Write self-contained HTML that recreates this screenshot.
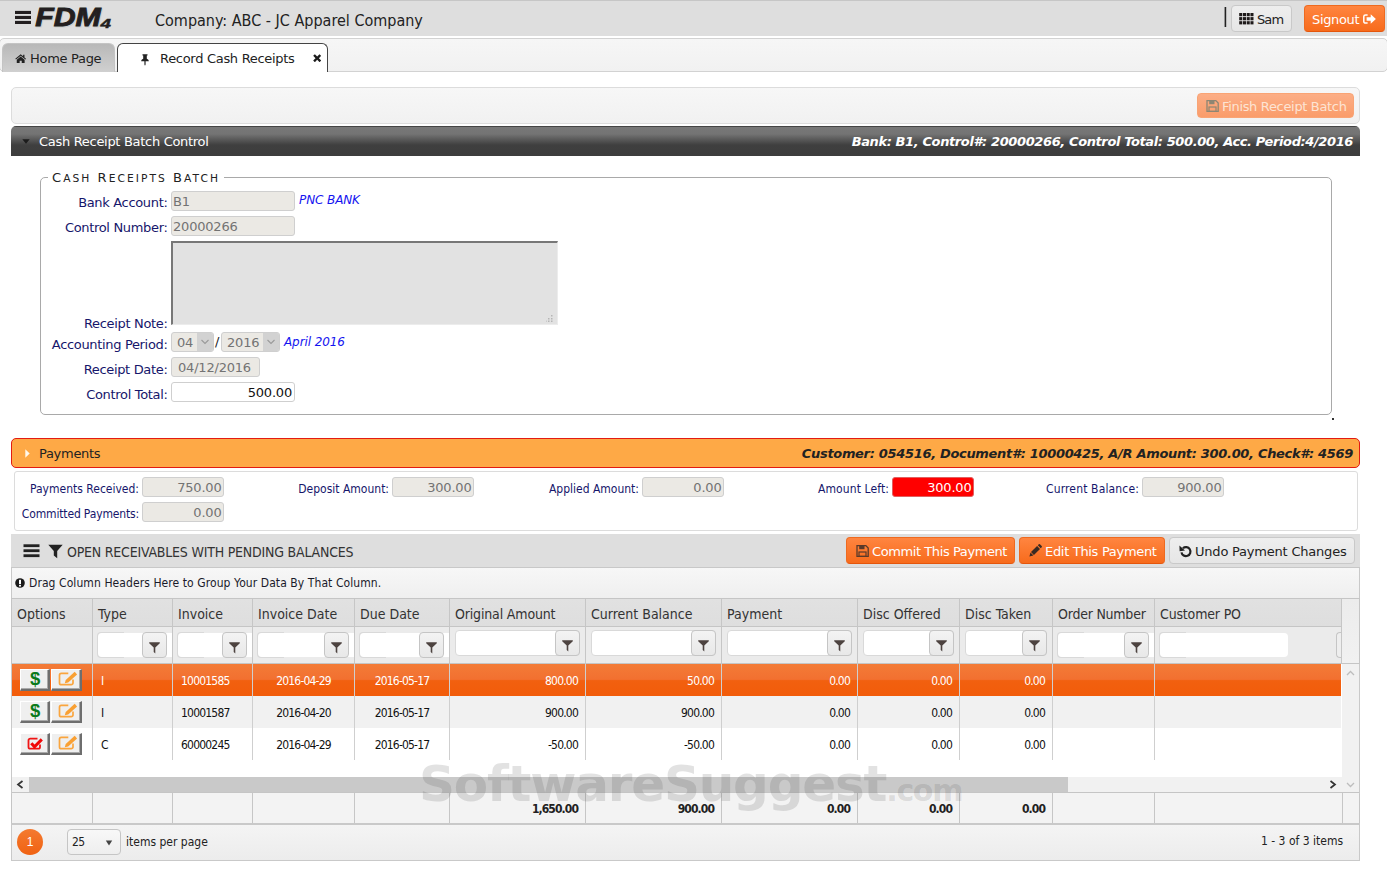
<!DOCTYPE html>
<html><head><meta charset="utf-8"><title>Record Cash Receipts</title>
<style>
*{box-sizing:border-box;margin:0;padding:0}
html,body{width:1387px;height:882px;overflow:hidden;background:#fff}
body{position:relative;font-family:"DejaVu Sans","Liberation Sans",sans-serif;font-size:13px;color:#222}
.a{position:absolute;white-space:nowrap}
.v{font-family:"DejaVu Sans","Liberation Sans",sans-serif;font-size:13px;letter-spacing:-0.3px}
.t{font-family:"DejaVu Sans Condensed","Liberation Sans",sans-serif}
/* top bar */
#top{left:0;top:0;width:1387px;height:36px;background:#dedede;border-top:1px solid #c6c6c6}
#tabs{left:-1px;top:38px;width:1389px;height:34px;background:linear-gradient(#f6f6f6,#f1f1f1);border:1px solid #d2d2d2;border-radius:5px}
.tab{top:43px;height:29px;border-radius:6px 6px 0 0;line-height:29px}
#tab1{left:2px;width:113px;background:linear-gradient(#b8b8b8,#d0d0d0);border:1px solid #c4c4c4;border-bottom:none}
#tab2{left:117px;width:211px;background:#fff;border:1px solid #444;border-bottom:none}
.btn{border-radius:4px;text-align:center}
.obtn{background:linear-gradient(#ff8540,#f76b1c);border:1px solid #ee6a20;border-bottom-color:#e4560c;color:#fff}
.gbtn{background:linear-gradient(#eeeeee,#e6e6e6);border:1px solid #c9c9c9;color:#222}

#hdr1{left:11px;top:126px;width:1349px;height:30px;border-radius:5px 5px 0 0;background:linear-gradient(#444 0,#444 1px,#777 1.500px,#747474 8px,#656565 11px,#525252 15px,#3f3f3f 19px,#3d3d3d 100%);color:#fff;line-height:30px}
#hdr2{left:11px;top:438px;width:1349px;height:30px;border-radius:5px;background:#fea946;border:1px solid #e21b12;color:#222;line-height:28px}
#tb1{left:11px;top:87px;width:1349px;height:37px;border:1px solid #dcdcdc;border-radius:5px;background:linear-gradient(#f7f7f7,#f1f1f1)}
.bi{font-weight:bold;font-style:italic}

#fs{left:40px;top:177px;width:1292px;height:238px;border:1px solid #a9a9a9;border-radius:5px}
.lbl{color:#16166b;text-align:right;width:160px;left:7.500px;margin-top:1px;line-height:18px;letter-spacing:-0.33px}
.inp{height:20px;border:1px solid #cfcfcf;border-radius:3px;background:#ebe9e4;color:#737373;line-height:20px;padding:0 1px;letter-spacing:-0.2px}
.it{font-style:italic;color:#1414f0;font-size:12px;letter-spacing:-0.1px;line-height:18px}
.sl{font-family:"DejaVu Sans Condensed","Liberation Sans",sans-serif;font-size:12px;color:#16166b;text-align:right;line-height:18px}
.si{font-size:13px;text-align:right;padding:0 1.500px 0 2px}

#gtb{left:11px;top:534px;width:1349px;height:34px;background:#dedede;border-bottom:1px solid #c8c8c8}
#grp{left:11px;top:568px;width:1349px;height:30px;background:linear-gradient(#f7f7f7,#efefef);border-left:1px solid #c9c9c9;border-right:1px solid #c9c9c9}
#ghd{left:11px;top:598px;width:1349px;height:29px;background:linear-gradient(#e1e1e1,#dedede);border:1px solid #c5c5c5}
#gfl{left:11px;top:627px;width:1349px;height:37px;background:#ebebeb;border-left:1px solid #c5c5c5;border-right:1px solid #c5c5c5;border-bottom:1px solid #c5c5c5}
.vl{width:1px;background:#c6c6c6}
.th{top:604px;line-height:20px;font-size:14px;color:#333;font-family:"DejaVu Sans Condensed","Liberation Sans",sans-serif}
.row{left:12px;width:1329px;height:32px}
.td{font-family:"DejaVu Sans Condensed","Liberation Sans",sans-serif;font-size:12px;letter-spacing:-0.8px;line-height:20px;color:#111}
.r{text-align:right}.c{text-align:center}
.fb{width:25px;height:26px;border:1px solid #c5c5c5;border-radius:4px;background:linear-gradient(#f3f3f3,#e8e8e8)}
.fi{height:26px;border:1px solid #d9d9d9;border-radius:4px;background:#fff}
.ob{height:22px;background:#efefef;border-top:1px solid #fff;border-left:1px solid #fff;border-right:2px solid #6e6e6e;border-bottom:2px solid #6e6e6e;box-shadow:inset -1px -1px 0 #a9a9a9}
</style></head>
<body>
<div id="top" class="a"></div>
<div id="tabs" class="a"></div>

<!-- top bar content -->
<svg class="a" style="left:14px;top:6px" width="100" height="26" viewBox="0 0 100 26">
 <rect x="1" y="4.900" width="16" height="3.100" fill="#231f20"/><rect x="1" y="9.900" width="16" height="3.100" fill="#231f20"/><rect x="1" y="14.900" width="16" height="3.100" fill="#231f20"/>
 <text x="22.300" y="21" font-family="Liberation Sans, sans-serif" font-weight="bold" font-style="italic" font-size="25.500" fill="#cfcfcf" stroke="#cfcfcf" stroke-width="0.900" textLength="65.500" lengthAdjust="spacingAndGlyphs">FDM</text>
 <text x="21.300" y="20" font-family="Liberation Sans, sans-serif" font-weight="bold" font-style="italic" font-size="25.500" fill="#231f20" stroke="#231f20" stroke-width="0.900" stroke-linejoin="miter" textLength="65.500" lengthAdjust="spacingAndGlyphs">FDM</text>
 <text x="86.500" y="21.600" font-family="Liberation Sans, sans-serif" font-weight="bold" font-style="italic" font-size="12.500" fill="#231f20" stroke="#231f20" stroke-width="0.400" textLength="10.500" lengthAdjust="spacingAndGlyphs">4</text>
</svg>
<div class="a t" style="left:155px;top:10.500px;font-size:16px;line-height:20px;color:#222">Company: ABC - JC Apparel Company</div>
<svg class="a" style="left:1223px;top:7px" width="5" height="20"><rect x="1.600" y="0" width="1.600" height="20" fill="#222"/></svg>
<div class="a btn gbtn" style="left:1231px;top:5px;width:61px;height:27px"></div>
<svg class="a" style="left:1238.600px;top:12.600px" width="15" height="12" viewBox="0 0 15 12"><g fill="#1e1a1a"><rect x="0.20" y="0.00" width="3.05" height="3.2"/><rect x="3.95" y="0.00" width="3.05" height="3.2"/><rect x="7.70" y="0.00" width="3.05" height="3.2"/><rect x="11.45" y="0.00" width="3.05" height="3.2"/><rect x="0.20" y="4.10" width="3.05" height="3.2"/><rect x="3.95" y="4.10" width="3.05" height="3.2"/><rect x="7.70" y="4.10" width="3.05" height="3.2"/><rect x="11.45" y="4.10" width="3.05" height="3.2"/><rect x="0.20" y="8.20" width="3.05" height="3.2"/><rect x="3.95" y="8.20" width="3.05" height="3.2"/><rect x="7.70" y="8.20" width="3.05" height="3.2"/><rect x="11.45" y="8.20" width="3.05" height="3.2"/></g></svg>
<div class="a v" style="left:1257px;top:11px;line-height:18px;color:#222;letter-spacing:-0.9px">Sam</div>
<div class="a btn obtn" style="left:1304px;top:5px;width:81px;height:27px"></div>
<div class="a v" style="left:1312px;top:11px;line-height:18px;color:#fff;letter-spacing:-0.35px">Signout</div>
<svg class="a" style="left:1363.400px;top:14.200px" width="13" height="10" viewBox="0 0 13 10"><path d="M4.600 0.900H2.500A1.700 1.700 0 0 0 0.800 2.600V7.400A1.700 1.700 0 0 0 2.500 9.100H4.600" fill="none" stroke="#fff" stroke-width="1.500"/><path d="M3.600 3.300H7.700V0.300L12.900 5 7.700 9.700V6.700H3.600z" fill="#fff"/></svg>
<!-- tabs -->
<div id="tab1" class="a tab"></div>
<div id="tab2" class="a tab"></div>
<svg class="a" style="left:14.800px;top:53.800px" width="11.400" height="9.600" viewBox="0 0 13 11"><path d="M6.500 0.300L0.300 5.500l0.800 0.900L6.500 1.900l5.400 4.500 0.800-0.900L10.800 3.900V0.900H9.300v1.700z" fill="#222"/><path d="M6.500 2.800L2 6.600v4.100h3.300V7.600h2.400v3.100H11V6.600z" fill="#222"/></svg>
<div class="a v" style="left:30px;top:50px;line-height:18px;color:#222">Home Page</div>
<svg class="a" style="left:140px;top:54px" width="10" height="12" viewBox="0 0 10 12"><path d="M2.500 0.300h5v1.200H6.800v3.300c1.300 0.500 2 1.400 2 2.500H5.600v3.200L5 11.700l-0.600-1.200V7.300H1.200c0-1.100 0.700-2 2-2.500V1.500H2.500z" fill="#222"/></svg>
<div class="a v" style="left:160px;top:50px;line-height:18px;color:#222">Record Cash Receipts</div>
<svg class="a" style="left:312.500px;top:54px" width="8.400" height="8.400" viewBox="0 0 9 9"><path d="M2 0.200L4.500 2.700 7 0.200 8.800 2 6.300 4.500 8.800 7 7 8.800 4.500 6.300 2 8.800 0.200 7 2.700 4.500 0.200 2z" fill="#1c1c1c"/></svg>
<!-- toolbar -->
<div id="tb1" class="a"></div>
<div class="a btn" style="left:1197px;top:93px;width:157px;height:25px;background:linear-gradient(#fcae86,#fa9c6a);border:1px solid #f9a475"></div>
<svg class="a" style="left:1206px;top:100px" width="13" height="12" viewBox="0 0 13 12"><path d="M1 0.600h8.800L12.200 3v8.400H1z" fill="none" stroke="#8d8673" stroke-width="1.300"/><rect x="3.200" y="0.600" width="5.300" height="3.600" fill="#8d8673"/><rect x="3" y="7" width="7" height="4.400" fill="none" stroke="#8d8673" stroke-width="1.200"/></svg>
<div class="a v" style="left:1222px;top:98px;line-height:18px;color:#fde4d4;letter-spacing:-0.33px">Finish Receipt Batch</div>
<!-- dark header -->
<div id="hdr1" class="a"></div>
<svg class="a" style="left:22px;top:139px" width="8" height="5" viewBox="0 0 8 5"><path d="M0.300 0.300h7.400L4 4.700z" fill="#1c1c1c"/></svg>
<div class="a v" style="left:39px;top:133px;line-height:18px;color:#fff">Cash Receipt Batch Control</div>
<div class="a v bi" style="right:34px;top:133px;line-height:18px;color:#fff;letter-spacing:-0.39px">Bank: B1, Control#: 20000266, Control Total: 500.00, Acc. Period:4/2016</div>

<!-- fieldset -->
<div id="fs" class="a"></div>
<div class="a" style="left:48px;top:168px;height:20px;width:176px;background:#fff"></div>
<div class="a" style="left:52px;top:168px;line-height:20px;font-size:13px;color:#222;letter-spacing:2.05px;font-family:'DejaVu Sans',sans-serif">C<span style="font-size:10.700px">ASH</span> R<span style="font-size:10.700px">ECEIPTS</span> B<span style="font-size:10.700px">ATCH</span></div>
<div class="a v lbl" style="top:193px">Bank Account:</div>
<div class="a v inp" style="left:171px;top:191px;width:124px">B1</div>
<div class="a v it" style="left:299px;top:191px">PNC BANK</div>
<div class="a v lbl" style="top:218px">Control Number:</div>
<div class="a v inp" style="left:171px;top:216px;width:124px">20000266</div>
<div class="a" style="left:171px;top:241px;width:387px;height:84px;background:#e2e2e2;border-top:2px solid #777;border-left:2px solid #777;border-right:1px solid #ececec;border-bottom:1px solid #ececec"></div>
<svg class="a" style="left:546px;top:314px" width="8" height="8" viewBox="0 0 8 8"><g fill="#b5b5b5"><rect x="5" y="1" width="1.500" height="1.500"/><rect x="5" y="4" width="1.500" height="1.500"/><rect x="2" y="4" width="1.500" height="1.500"/><rect x="5" y="6.500" width="1.500" height="1.500"/><rect x="2" y="6.500" width="1.500" height="1.500"/><rect x="-1" y="6.500" width="1.500" height="1.500"/></g></svg>
<div class="a v lbl" style="top:314px">Receipt Note:</div>
<div class="a v lbl" style="top:335px">Accounting Period:</div>
<div class="a v inp" style="left:171px;top:332px;width:43px;padding-left:5px">04</div>
<div class="a" style="left:197px;top:333px;width:16px;height:18px;background:#d2d2d2;border-radius:0 2px 2px 0"></div>
<svg class="a" style="left:200px;top:339px" width="10" height="6" viewBox="0 0 10 6"><path d="M1.500 1L5 4.500 8.500 1" fill="none" stroke="#9a9a9a" stroke-width="1.100"/></svg>
<div class="a v" style="left:215px;top:333px;line-height:18px;color:#222">/</div>
<div class="a v inp" style="left:221px;top:332px;width:59px;padding-left:5px">2016</div>
<div class="a" style="left:263px;top:333px;width:16px;height:18px;background:#d2d2d2;border-radius:0 2px 2px 0"></div>
<svg class="a" style="left:266px;top:339px" width="10" height="6" viewBox="0 0 10 6"><path d="M1.500 1L5 4.500 8.500 1" fill="none" stroke="#9a9a9a" stroke-width="1.100"/></svg>
<div class="a v it" style="left:284px;top:333px">April 2016</div>
<div class="a v lbl" style="top:360px">Receipt Date:</div>
<div class="a v inp" style="left:171px;top:357px;width:89px;padding-left:6px">04/12/2016</div>
<div class="a v lbl" style="top:385px">Control Total:</div>
<div class="a v inp" style="left:171px;top:382px;width:124px;background:#fff;color:#111;text-align:right;padding-right:2px">500.00</div>
<div class="a" style="left:1332px;top:418px;width:2px;height:2px;background:#333"></div>
<!-- payments header -->
<div id="hdr2" class="a"></div>
<svg class="a" style="left:25px;top:449px" width="5" height="9" viewBox="0 0 5 9"><path d="M0.300 0.300L4.700 4.500 0.300 8.700z" fill="#fff8ec"/></svg>
<div class="a v" style="left:39px;top:445px;line-height:18px;color:#222">Payments</div>
<div class="a v bi" style="right:34px;top:445px;line-height:18px;color:#222;letter-spacing:-0.32px">Customer: 054516, Document#: 10000425, A/R Amount: 300.00, Check#: 4569</div>
<!-- summary -->
<div class="a" style="left:14px;top:471px;width:1344px;height:60px;border:1px solid #dcdcdc;border-radius:3px;background:#fff"></div>
<div class="a sl" style="left:0;width:139px;top:480px">Payments Received:</div>
<div class="a v inp si" style="left:142px;top:477px;width:82px">750.00</div>
<div class="a sl" style="left:0;width:139px;top:505px;letter-spacing:-0.15px">Committed Payments:</div>
<div class="a v inp si" style="left:142px;top:502px;width:82px">0.00</div>
<div class="a sl" style="left:250px;width:139px;top:480px">Deposit Amount:</div>
<div class="a v inp si" style="left:392px;top:477px;width:82px">300.00</div>
<div class="a sl" style="left:500px;width:139px;top:480px">Applied Amount:</div>
<div class="a v inp si" style="left:642px;top:477px;width:82px">0.00</div>
<div class="a sl" style="left:750px;width:139px;top:480px;letter-spacing:0.11px">Amount Left:</div>
<div class="a v inp si" style="left:892px;top:477px;width:82px;background:#ff0000;color:#fff;border-color:#e06060">300.00</div>
<div class="a sl" style="left:1000px;width:139px;top:480px;letter-spacing:0.15px">Current Balance:</div>
<div class="a v inp si" style="left:1142px;top:477px;width:82px">900.00</div>
<!-- grid toolbar -->
<div id="gtb" class="a"></div>
<svg class="a" style="left:23px;top:544px" width="17" height="14" viewBox="0 0 17 14"><g fill="#222"><rect x="0.500" y="0.300" width="16" height="2.800"/><rect x="0.500" y="5.300" width="16" height="2.800"/><rect x="0.500" y="10.300" width="16" height="2.800"/></g></svg>
<svg class="a" style="left:48px;top:544px" width="15" height="15" viewBox="0 0 15 15"><path d="M0.300 0.800h14.400L9.200 7v7.200L5.800 11.600V7z" fill="#222"/></svg>
<div class="a t" style="left:67px;top:542px;font-size:14px;line-height:20px;color:#333;letter-spacing:-0.21px">OPEN RECEIVABLES WITH PENDING BALANCES</div>
<div class="a btn obtn" style="left:846px;top:537px;width:169px;height:27px"></div>
<svg class="a" style="left:856px;top:545px" width="13" height="12" viewBox="0 0 13 12"><path d="M1 0.600h8.800L12.200 3v8.400H1z" fill="none" stroke="#5a3a2a" stroke-width="1.300"/><rect x="3.200" y="0.600" width="5.300" height="3.600" fill="#5a3a2a"/><rect x="3" y="7" width="7" height="4.400" fill="none" stroke="#5a3a2a" stroke-width="1.200"/></svg>
<div class="a v" style="left:872px;top:543px;line-height:18px;color:#fff;letter-spacing:-0.41px">Commit This Payment</div>
<div class="a btn obtn" style="left:1019px;top:537px;width:146px;height:27px"></div>
<svg class="a" style="left:1029px;top:544px" width="13" height="13" viewBox="0 0 13 13"><g fill="#3a2a22"><path d="M0.400 12.600L1.500 8.600 4.400 11.500z"/><path d="M2 8.100L8.100 2 11 4.900 4.900 11z"/><path d="M8.800 1.300L9.800 0.300a0.800 0.800 0 0 1 1.100 0L12.700 2.100a0.800 0.800 0 0 1 0 1.100L11.700 4.200z"/></g></svg>
<div class="a v" style="left:1045px;top:543px;line-height:18px;color:#fff;letter-spacing:-0.31px">Edit This Payment</div>
<div class="a btn gbtn" style="left:1169px;top:537px;width:186px;height:27px"></div>
<svg class="a" style="left:1178.500px;top:544.500px" width="14" height="13" viewBox="0 0 14 13"><path d="M3.900 3.300A4.500 4.500 0 1 1 2.500 7.300" fill="none" stroke="#222" stroke-width="2.200"/><path d="M0.400 0.600l0.200 5.600 5.400-0.800z" fill="#222"/></svg>
<div class="a v" style="left:1195px;top:543px;line-height:18px;color:#222;letter-spacing:-0.21px">Undo Payment Changes</div>
<!-- grouping -->
<div id="grp" class="a"></div>
<svg class="a" style="left:15px;top:578px" width="10" height="10" viewBox="0 0 10 10"><circle cx="5" cy="5" r="4.800" fill="#1a1a1a"/><rect x="4" y="1.800" width="2" height="4.200" fill="#fff"/><rect x="4" y="6.800" width="2" height="1.700" fill="#fff"/></svg>
<div class="a t" style="left:29px;top:573px;font-size:12px;line-height:20px;color:#1a1a2a;letter-spacing:0.08px">Drag Column Headers Here to Group Your Data By That Column.</div>
<!-- grid header -->
<div id="ghd" class="a"></div><div id="gfl" class="a"></div>
<div class="a th" style="left:17px">Options</div>
<div class="a th" style="left:98px">Type</div>
<div class="a th" style="left:178px">Invoice</div>
<div class="a th" style="left:258px">Invoice Date</div>
<div class="a th" style="left:360px">Due Date</div>
<div class="a th" style="left:455px;letter-spacing:-0.16px">Original Amount</div>
<div class="a th" style="left:591px">Current Balance</div>
<div class="a th" style="left:727px">Payment</div>
<div class="a th" style="left:863px">Disc Offered</div>
<div class="a th" style="left:965px">Disc Taken</div>
<div class="a th" style="left:1058px;letter-spacing:-0.23px">Order Number</div>
<div class="a th" style="left:1160px;letter-spacing:-0.17px">Customer PO</div>
<div class="a vl" style="left:92px;top:599px;height:64px"></div>
<div class="a vl" style="left:172px;top:599px;height:64px"></div>
<div class="a vl" style="left:252px;top:599px;height:64px"></div>
<div class="a vl" style="left:354px;top:599px;height:64px"></div>
<div class="a vl" style="left:449px;top:599px;height:64px"></div>
<div class="a vl" style="left:585px;top:599px;height:64px"></div>
<div class="a vl" style="left:721px;top:599px;height:64px"></div>
<div class="a vl" style="left:857px;top:599px;height:64px"></div>
<div class="a vl" style="left:959px;top:599px;height:64px"></div>
<div class="a vl" style="left:1052px;top:599px;height:64px"></div>
<div class="a vl" style="left:1154px;top:599px;height:64px"></div>
<div class="a vl" style="left:1341px;top:599px;height:64px"></div>
<div class="a" style="left:98px;top:633px;width:74px;height:24px;background:#fff;border-radius:4px 0 0 4px"></div>
<div class="a" style="left:97px;top:632px;width:27px;height:26px;border:1px solid #d9d9d9;border-right:none;border-radius:4px 0 0 4px"></div>
<div class="a fb" style="left:142px;top:632px"><svg width="11" height="12" viewBox="0 0 11 12" style="position:absolute;left:5.800px;top:8.600px"><path d="M0.200 0.300h10.600v0.900L6.300 5.600v5.900L4.700 9.900V5.600L0.200 1.200z" fill="#4d4340"/></svg></div>
<div class="a" style="left:178px;top:633px;width:74px;height:24px;background:#fff;border-radius:4px 0 0 4px"></div>
<div class="a" style="left:177px;top:632px;width:27px;height:26px;border:1px solid #d9d9d9;border-right:none;border-radius:4px 0 0 4px"></div>
<div class="a fb" style="left:222px;top:632px"><svg width="11" height="12" viewBox="0 0 11 12" style="position:absolute;left:5.800px;top:8.600px"><path d="M0.200 0.300h10.600v0.900L6.300 5.600v5.900L4.700 9.900V5.600L0.200 1.200z" fill="#4d4340"/></svg></div>
<div class="a" style="left:258px;top:633px;width:96px;height:24px;background:#fff;border-radius:4px 0 0 4px"></div>
<div class="a" style="left:257px;top:632px;width:27px;height:26px;border:1px solid #d9d9d9;border-right:none;border-radius:4px 0 0 4px"></div>
<div class="a fb" style="left:324px;top:632px"><svg width="11" height="12" viewBox="0 0 11 12" style="position:absolute;left:5.800px;top:8.600px"><path d="M0.200 0.300h10.600v0.900L6.300 5.600v5.900L4.700 9.900V5.600L0.200 1.200z" fill="#4d4340"/></svg></div>
<div class="a" style="left:360px;top:633px;width:89px;height:24px;background:#fff;border-radius:4px 0 0 4px"></div>
<div class="a" style="left:359px;top:632px;width:27px;height:26px;border:1px solid #d9d9d9;border-right:none;border-radius:4px 0 0 4px"></div>
<div class="a fb" style="left:419px;top:632px"><svg width="11" height="12" viewBox="0 0 11 12" style="position:absolute;left:5.800px;top:8.600px"><path d="M0.200 0.300h10.600v0.900L6.300 5.600v5.900L4.700 9.900V5.600L0.200 1.200z" fill="#4d4340"/></svg></div>
<div class="a fi" style="left:455px;top:630px;width:125px"></div>
<div class="a fb" style="left:555px;top:630px"><svg width="11" height="12" viewBox="0 0 11 12" style="position:absolute;left:5.800px;top:8.600px"><path d="M0.200 0.300h10.600v0.900L6.300 5.600v5.900L4.700 9.900V5.600L0.200 1.200z" fill="#4d4340"/></svg></div>
<div class="a fi" style="left:591px;top:630px;width:125px"></div>
<div class="a fb" style="left:691px;top:630px"><svg width="11" height="12" viewBox="0 0 11 12" style="position:absolute;left:5.800px;top:8.600px"><path d="M0.200 0.300h10.600v0.900L6.300 5.600v5.900L4.700 9.900V5.600L0.200 1.200z" fill="#4d4340"/></svg></div>
<div class="a fi" style="left:727px;top:630px;width:125px"></div>
<div class="a fb" style="left:827px;top:630px"><svg width="11" height="12" viewBox="0 0 11 12" style="position:absolute;left:5.800px;top:8.600px"><path d="M0.200 0.300h10.600v0.900L6.300 5.600v5.900L4.700 9.900V5.600L0.200 1.200z" fill="#4d4340"/></svg></div>
<div class="a fi" style="left:863px;top:630px;width:91px"></div>
<div class="a fb" style="left:929px;top:630px"><svg width="11" height="12" viewBox="0 0 11 12" style="position:absolute;left:5.800px;top:8.600px"><path d="M0.200 0.300h10.600v0.900L6.300 5.600v5.900L4.700 9.900V5.600L0.200 1.200z" fill="#4d4340"/></svg></div>
<div class="a fi" style="left:965px;top:630px;width:82px"></div>
<div class="a fb" style="left:1022px;top:630px"><svg width="11" height="12" viewBox="0 0 11 12" style="position:absolute;left:5.800px;top:8.600px"><path d="M0.200 0.300h10.600v0.900L6.300 5.600v5.900L4.700 9.900V5.600L0.200 1.200z" fill="#4d4340"/></svg></div>
<div class="a" style="left:1058px;top:633px;width:96px;height:24px;background:#fff;border-radius:4px 0 0 4px"></div>
<div class="a" style="left:1057px;top:632px;width:27px;height:26px;border:1px solid #d9d9d9;border-right:none;border-radius:4px 0 0 4px"></div>
<div class="a fb" style="left:1124px;top:632px"><svg width="11" height="12" viewBox="0 0 11 12" style="position:absolute;left:5.800px;top:8.600px"><path d="M0.200 0.300h10.600v0.900L6.300 5.600v5.900L4.700 9.900V5.600L0.200 1.200z" fill="#4d4340"/></svg></div>
<div class="a" style="left:1160px;top:633px;width:128px;height:24px;background:#fff;border-radius:4px"></div>
<div class="a" style="left:1159px;top:632px;width:27px;height:26px;border:1px solid #d9d9d9;border-right:none;border-radius:4px 0 0 4px"></div>
<div class="a" style="left:1336px;top:632px;width:5px;height:26px;border:1px solid #c5c5c5;border-right:none;border-radius:4px 0 0 4px;background:#eee"></div>
<div class="a row" style="top:664px;background:linear-gradient(#f37b37 0%,#f27030 48%,#f2600f 52%,#f25c0a 100%)"></div>
<div class="a ob" style="left:20px;top:669px;width:30px"><span style="position:absolute;left:9px;top:-1.500px;font:bold 18.500px/20px 'Liberation Sans',sans-serif;color:#0b7a1b">$</span></div>
<div class="a ob" style="left:51px;top:669px;width:31px"><svg width="22" height="17" viewBox="0 0 22 17" style="position:absolute;left:5.500px;top:-0.500px;overflow:visible"><path d="M15 9.500v3.400a1.800 1.800 0 0 1-1.800 1.800H3.300a1.800 1.800 0 0 1-1.800-1.800V5.100a1.800 1.800 0 0 1 1.800-1.800h7" fill="none" stroke="#faa53e" stroke-width="1.700"/><path d="M6.800 13.300L7.700 9.900 16.700 1.800 19.100 4.500 10.200 12.600z" fill="#f9a033"/></svg></div>
<div class="a td" style="left:101px;top:671px;color:#fff">I</div>
<div class="a td" style="left:181px;top:671px;color:#fff">10001585</div>
<div class="a td" style="left:253px;width:101px;text-align:center;top:671px;color:#fff">2016-04-29</div>
<div class="a td" style="left:355px;width:94px;text-align:center;top:671px;color:#fff">2016-05-17</div>
<div class="a td" style="left:450px;width:128px;text-align:right;top:671px;color:#fff">800.00</div>
<div class="a td" style="left:586px;width:128px;text-align:right;top:671px;color:#fff">50.00</div>
<div class="a td" style="left:722px;width:128px;text-align:right;top:671px;color:#fff">0.00</div>
<div class="a td" style="left:858px;width:94px;text-align:right;top:671px;color:#fff">0.00</div>
<div class="a td" style="left:960px;width:85px;text-align:right;top:671px;color:#fff">0.00</div>
<div class="a row" style="top:696px;background:#f1f1f1"></div>
<div class="a ob" style="left:20px;top:701px;width:30px"><span style="position:absolute;left:9px;top:-1.500px;font:bold 18.500px/20px 'Liberation Sans',sans-serif;color:#0b7a1b">$</span></div>
<div class="a ob" style="left:51px;top:701px;width:31px"><svg width="22" height="17" viewBox="0 0 22 17" style="position:absolute;left:5.500px;top:-0.500px;overflow:visible"><path d="M15 9.500v3.400a1.800 1.800 0 0 1-1.800 1.800H3.300a1.800 1.800 0 0 1-1.800-1.800V5.100a1.800 1.800 0 0 1 1.800-1.800h7" fill="none" stroke="#faa53e" stroke-width="1.700"/><path d="M6.800 13.300L7.700 9.900 16.700 1.800 19.100 4.500 10.200 12.600z" fill="#f9a033"/></svg></div>
<div class="a td" style="left:101px;top:703px;color:#111">I</div>
<div class="a td" style="left:181px;top:703px;color:#111">10001587</div>
<div class="a td" style="left:253px;width:101px;text-align:center;top:703px;color:#111">2016-04-20</div>
<div class="a td" style="left:355px;width:94px;text-align:center;top:703px;color:#111">2016-05-17</div>
<div class="a td" style="left:450px;width:128px;text-align:right;top:703px;color:#111">900.00</div>
<div class="a td" style="left:586px;width:128px;text-align:right;top:703px;color:#111">900.00</div>
<div class="a td" style="left:722px;width:128px;text-align:right;top:703px;color:#111">0.00</div>
<div class="a td" style="left:858px;width:94px;text-align:right;top:703px;color:#111">0.00</div>
<div class="a td" style="left:960px;width:85px;text-align:right;top:703px;color:#111">0.00</div>
<div class="a row" style="top:728px;background:#fff"></div>
<div class="a ob" style="left:20px;top:733px;width:30px"><svg width="18" height="17" viewBox="0 0 18 17" style="position:absolute;left:6px;top:1px;overflow:visible"><path d="M13 9.500v2.400a1.800 1.800 0 0 1-1.800 1.800H3.300a1.800 1.800 0 0 1-1.800-1.800V5.400a1.800 1.800 0 0 1 1.800-1.800h7.200" fill="none" stroke="#f01414" stroke-width="1.800"/><path d="M4.300 8.200L7.500 11.800 14.800 4.400" fill="none" stroke="#f00808" stroke-width="3" stroke-linejoin="miter"/></svg></div>
<div class="a ob" style="left:51px;top:733px;width:31px"><svg width="22" height="17" viewBox="0 0 22 17" style="position:absolute;left:5.500px;top:-0.500px;overflow:visible"><path d="M15 9.500v3.400a1.800 1.800 0 0 1-1.800 1.800H3.300a1.800 1.800 0 0 1-1.800-1.800V5.100a1.800 1.800 0 0 1 1.800-1.800h7" fill="none" stroke="#faa53e" stroke-width="1.700"/><path d="M6.800 13.300L7.700 9.900 16.700 1.800 19.100 4.500 10.200 12.600z" fill="#f9a033"/></svg></div>
<div class="a td" style="left:101px;top:735px;color:#111">C</div>
<div class="a td" style="left:181px;top:735px;color:#111">60000245</div>
<div class="a td" style="left:253px;width:101px;text-align:center;top:735px;color:#111">2016-04-29</div>
<div class="a td" style="left:355px;width:94px;text-align:center;top:735px;color:#111">2016-05-17</div>
<div class="a td" style="left:450px;width:128px;text-align:right;top:735px;color:#111">-50.00</div>
<div class="a td" style="left:586px;width:128px;text-align:right;top:735px;color:#111">-50.00</div>
<div class="a td" style="left:722px;width:128px;text-align:right;top:735px;color:#111">0.00</div>
<div class="a td" style="left:858px;width:94px;text-align:right;top:735px;color:#111">0.00</div>
<div class="a td" style="left:960px;width:85px;text-align:right;top:735px;color:#111">0.00</div>
<div class="a vl" style="left:92px;top:664px;height:96px;background:#cfcfcf"></div>
<div class="a vl" style="left:172px;top:664px;height:96px;background:#cfcfcf"></div>
<div class="a vl" style="left:252px;top:664px;height:96px;background:#cfcfcf"></div>
<div class="a vl" style="left:354px;top:664px;height:96px;background:#cfcfcf"></div>
<div class="a vl" style="left:449px;top:664px;height:96px;background:#cfcfcf"></div>
<div class="a vl" style="left:585px;top:664px;height:96px;background:#cfcfcf"></div>
<div class="a vl" style="left:721px;top:664px;height:96px;background:#cfcfcf"></div>
<div class="a vl" style="left:857px;top:664px;height:96px;background:#cfcfcf"></div>
<div class="a vl" style="left:959px;top:664px;height:96px;background:#cfcfcf"></div>
<div class="a vl" style="left:1052px;top:664px;height:96px;background:#cfcfcf"></div>
<div class="a vl" style="left:1154px;top:664px;height:96px;background:#cfcfcf"></div>
<!-- scrollbars -->
<div class="a" style="left:1342px;top:599px;width:17px;height:64px;background:linear-gradient(#ececec,#f1f1f1)"></div>
<div class="a" style="left:1342px;top:664px;width:17px;height:129px;background:#f1f1f1"></div>
<svg class="a" style="left:1346px;top:670px" width="9" height="6" viewBox="0 0 9 6"><path d="M1 5L4.500 1.500 8 5" fill="none" stroke="#bdbdbd" stroke-width="1.300"/></svg>
<svg class="a" style="left:1346px;top:782px" width="9" height="6" viewBox="0 0 9 6"><path d="M1 1L4.500 4.500 8 1" fill="none" stroke="#bdbdbd" stroke-width="1.300"/></svg>
<div class="a" style="left:12px;top:777px;width:1330px;height:16px;background:#f1f1f1"></div>
<div class="a" style="left:29px;top:777px;width:1039px;height:15px;background:#c9c9c9"></div>
<svg class="a" style="left:16px;top:780px" width="8" height="9" viewBox="0 0 8 9"><path d="M6.500 1L2 4.500 6.500 8" fill="none" stroke="#333" stroke-width="1.700"/></svg>
<svg class="a" style="left:1329px;top:780px" width="8" height="9" viewBox="0 0 8 9"><path d="M1.500 1L6 4.500 1.500 8" fill="none" stroke="#333" stroke-width="1.700"/></svg>
<!-- footer -->
<div class="a" style="left:11px;top:792px;width:1349px;height:32px;background:#f3f3f3;border:1px solid #c5c5c5;border-bottom:none"></div>
<div class="a vl" style="left:92px;top:793px;height:31px"></div>
<div class="a vl" style="left:172px;top:793px;height:31px"></div>
<div class="a vl" style="left:252px;top:793px;height:31px"></div>
<div class="a vl" style="left:354px;top:793px;height:31px"></div>
<div class="a vl" style="left:449px;top:793px;height:31px"></div>
<div class="a vl" style="left:585px;top:793px;height:31px"></div>
<div class="a vl" style="left:721px;top:793px;height:31px"></div>
<div class="a vl" style="left:857px;top:793px;height:31px"></div>
<div class="a vl" style="left:959px;top:793px;height:31px"></div>
<div class="a vl" style="left:1052px;top:793px;height:31px"></div>
<div class="a vl" style="left:1154px;top:793px;height:31px"></div>
<div class="a vl" style="left:1342px;top:793px;height:31px"></div>
<div class="a td" style="left:450px;width:128px;text-align:right;top:799px;font-weight:bold;color:#222;letter-spacing:-0.9px">1,650.00</div>
<div class="a td" style="left:586px;width:128px;text-align:right;top:799px;font-weight:bold;color:#222;letter-spacing:-0.9px">900.00</div>
<div class="a td" style="left:722px;width:128px;text-align:right;top:799px;font-weight:bold;color:#222;letter-spacing:-0.9px">0.00</div>
<div class="a td" style="left:858px;width:94px;text-align:right;top:799px;font-weight:bold;color:#222;letter-spacing:-0.9px">0.00</div>
<div class="a td" style="left:960px;width:85px;text-align:right;top:799px;font-weight:bold;color:#222;letter-spacing:-0.9px">0.00</div>
<!-- pager -->
<div class="a" style="left:11px;top:823px;width:1349px;height:38px;background:linear-gradient(#f4f4f4,#ececec);border:1px solid #c9c9c9;border-top:2px solid #c9c9c9"></div>
<div class="a" style="font-family:'Liberation Sans',sans-serif;left:17px;top:829px;width:26px;height:26px;border-radius:13px;background:linear-gradient(#f47a30,#f06212);color:#fff;text-align:center;line-height:26px;font-size:12px">1</div>
<div class="a" style="left:67px;top:829px;width:54px;height:26px;border:1px solid #c5c5c5;border-radius:4px;background:linear-gradient(#f8f8f8,#eee)"></div>
<div class="a t" style="left:72px;top:833px;line-height:18px;font-size:12px;color:#222;letter-spacing:-0.6px">25</div>
<svg class="a" style="left:105px;top:840px" width="8" height="6" viewBox="0 0 8 6"><path d="M0.800 0.500h6.400L4 5.500z" fill="#444"/></svg>
<div class="a t" style="left:126px;top:833px;line-height:18px;font-size:12px;color:#222">items per page</div>
<div class="a t" style="left:1261px;top:832px;line-height:18px;font-size:12px;color:#222">1 - 3 of 3 items</div>
<!-- grid side borders -->
<div class="a vl" style="left:11px;top:664px;height:130px;background:#c9c9c9"></div>
<div class="a vl" style="left:1359px;top:664px;height:130px;background:#c9c9c9"></div>
<!-- watermark -->
<div class="a" style="left:419px;top:753.500px;font-family:'DejaVu Sans',sans-serif;font-weight:bold;font-size:50px;line-height:60px;letter-spacing:-1.200px;color:rgba(60,60,60,0.150)">SoftwareSuggest<span style="font-size:30px;letter-spacing:-1.300px">.com</span></div>
</body></html>
